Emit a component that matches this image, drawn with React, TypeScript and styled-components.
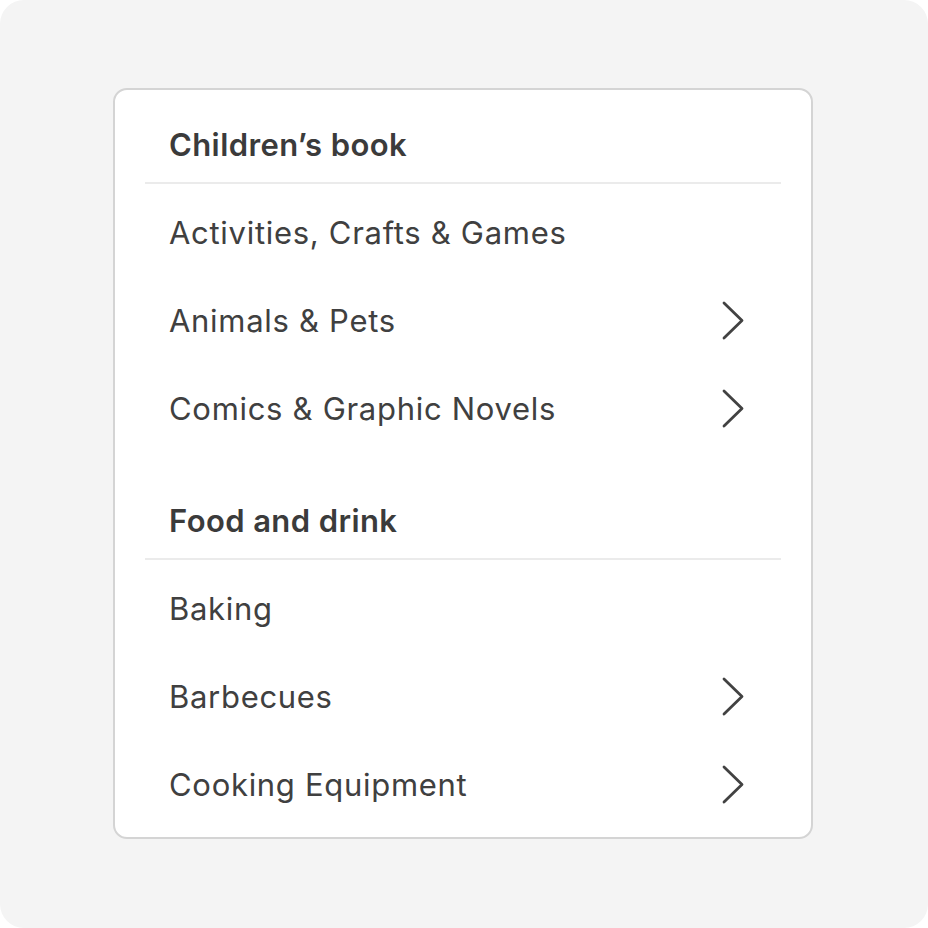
import styled, { createGlobalStyle } from 'styled-components';

const GlobalStyle = createGlobalStyle`
	html, body {
		margin: 0;
		padding: 0;
		background: #ffffff;
	}
	body {
		font-family: Inter, "Noto Sans", sans-serif;
	}
`;

interface Category {
	title: string;
	items: { label: string; hasChildren?: boolean }[];
}

const categories: Category[] = [
	{
		title: 'Children’s book',
		items: [
			{ label: 'Activities, Crafts & Games' },
			{ label: 'Animals & Pets', hasChildren: true },
			{ label: 'Comics & Graphic Novels', hasChildren: true },
		],
	},
	{
		title: 'Food and drink',
		items: [
			{ label: 'Baking' },
			{ label: 'Barbecues', hasChildren: true },
			{ label: 'Cooking Equipment', hasChildren: true },
		],
	},
];

const Canvas = styled.div`
	width: 928px;
	height: 928px;
	box-sizing: border-box;
	background: #f4f4f4;
	border-radius: 24px;
	padding: 88px 0 0 113px;
`;

const Card = styled.div`
	width: 700px;
	box-sizing: border-box;
	background: #ffffff;
	border: 2px solid #d4d4d4;
	border-radius: 14px;
	padding: 0 30px 9px;
`;

const Section = styled.section<{ first?: boolean }>`
	padding-top: ${(props) => (props.first ? '37px' : '51px')};
`;

const Heading = styled.h2`
	margin: 0;
	padding: 0 24px 19px;
	font-size: 31px;
	line-height: 36px;
	font-weight: 600;
	letter-spacing: 0.4px;
	color: #3b3b3b;
	border-bottom: 2px solid #ebebeb;
`;

const List = styled.ul`
	list-style: none;
	margin: 0;
	padding: 4px 0 0;
`;

const Row = styled.li`
	height: 88px;
	display: flex;
	align-items: center;
	justify-content: space-between;
	padding: 0 37px 0 24px;
	font-size: 31px;
	letter-spacing: 0.7px;
	color: #404040;
`;

const Chevron = styled.svg`
	width: 23px;
	height: 39px;
	flex-shrink: 0;
	color: #424242;
`;

function ChevronRight() {
	return (
		<Chevron viewBox="0 0 23 39" fill="none">
			<polyline
				points="3,2 21,19.5 3,37"
				stroke="currentColor"
				strokeWidth="2.8"
				strokeLinecap="round"
				strokeLinejoin="round"
			/>
		</Chevron>
	);
}

export default function App() {
	return (
		<>
			<GlobalStyle />
			<Canvas>
				<Card>
					{categories.map((category, i) => (
						<Section key={category.title} first={i === 0}>
							<Heading>{category.title}</Heading>
							<List>
								{category.items.map((item) => (
									<Row key={item.label}>
										<span>{item.label}</span>
										{item.hasChildren && <ChevronRight />}
									</Row>
								))}
							</List>
						</Section>
					))}
				</Card>
			</Canvas>
		</>
	);
}
